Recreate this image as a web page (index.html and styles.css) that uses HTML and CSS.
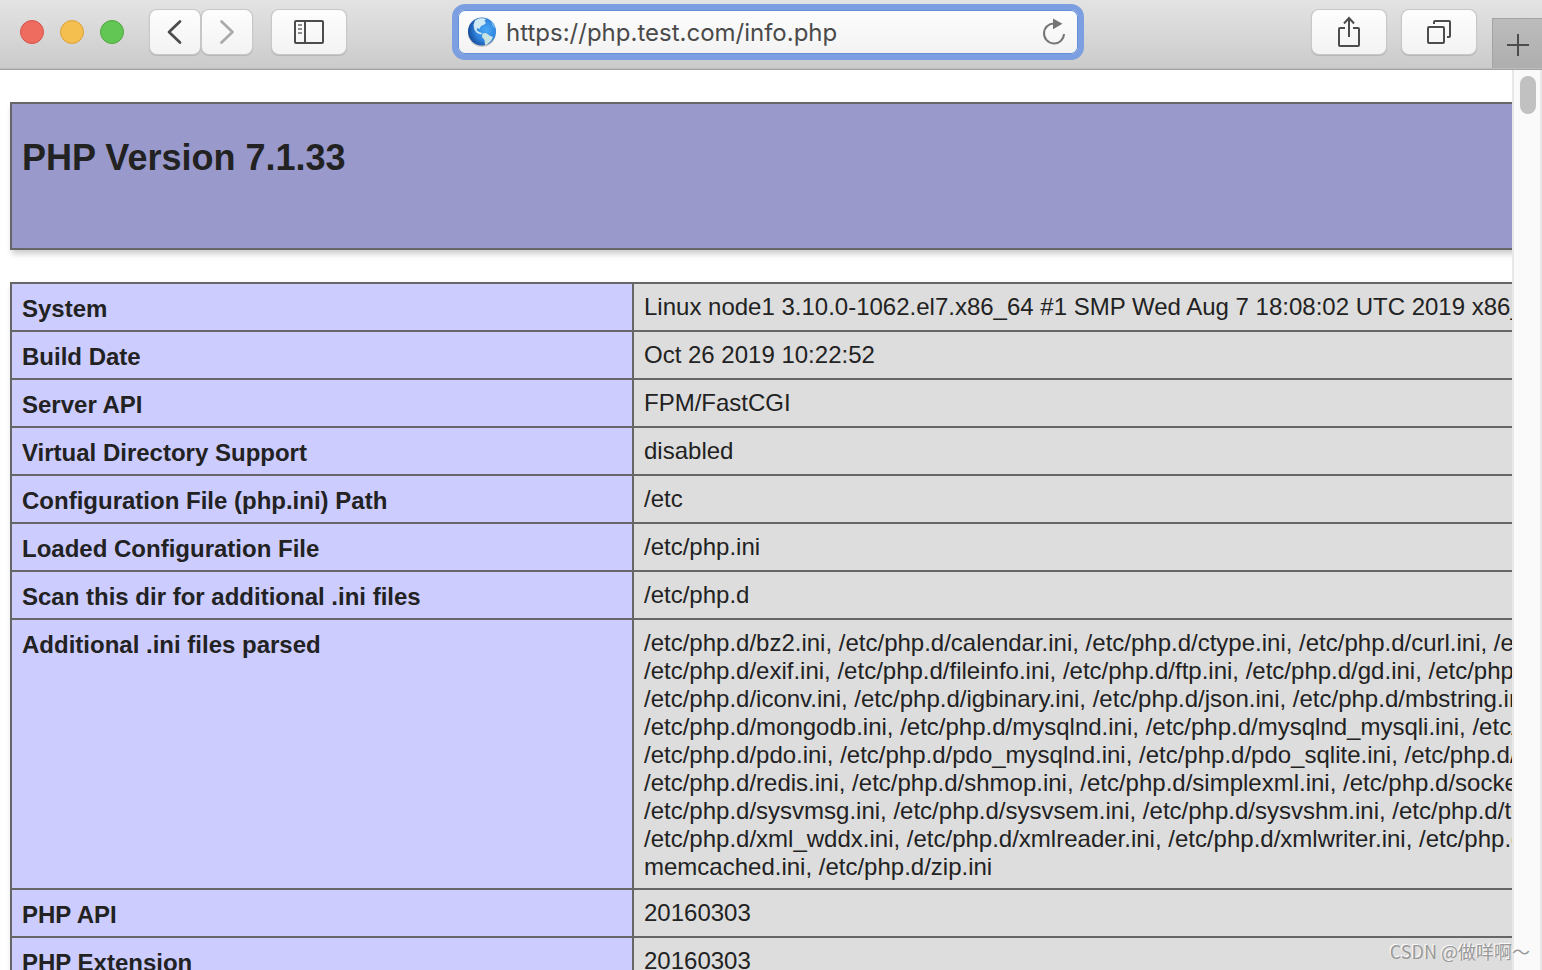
FILE: index.html
```html
<!DOCTYPE html>
<html lang="en">
<head>
<meta charset="utf-8">
<title>phpinfo()</title>
<link rel="stylesheet" href="styles.css">
</head>
<body>
<header class="toolbar">
  <div class="side side-left">
    <div class="lights">
      <button class="light light-close" aria-label="Close"></button>
      <button class="light light-min" aria-label="Minimize"></button>
      <button class="light light-max" aria-label="Zoom"></button>
    </div>
    <div class="nav">
      <button class="btn btn-nav" aria-label="Back"><svg width="50" height="44" viewBox="0 0 50 44"><path d="M30 11.500L19 22L30 32.500" fill="none" stroke="#4c4c4c" stroke-width="2.700" stroke-linecap="round" stroke-linejoin="round"/></svg></button>
      <button class="btn btn-nav" aria-label="Forward"><svg width="50" height="44" viewBox="0 0 50 44"><path d="M19.500 11.500L30.500 22L19.500 32.500" fill="none" stroke="#aaa" stroke-width="2.700" stroke-linecap="round" stroke-linejoin="round"/></svg></button>
    </div>
    <button class="btn btn-wide" aria-label="Show sidebar"><svg width="32" height="26" viewBox="0 0 32 26"><rect x="2" y="2" width="28" height="22" rx="1" fill="none" stroke="#4c4c4c" stroke-width="2"/><path d="M12 2V24" stroke="#4c4c4c" stroke-width="2"/><path d="M5 6H9M5 10H9M5 14H9" stroke="#8c8c8c" stroke-width="2"/></svg></button>
  </div>
  <form class="address">
    <svg class="globe" width="30" height="32" viewBox="0 0 30 32">
      <defs><radialGradient id="sea" cx=".65" cy=".45" r=".65"><stop offset="0" stop-color="#49a9f7"/><stop offset=".6" stop-color="#2f83dc"/><stop offset="1" stop-color="#164c9b"/></radialGradient></defs>
      <ellipse cx="15" cy="17" rx="14" ry="14" fill="#000" opacity=".18"/>
      <circle cx="15" cy="15.500" r="14" fill="url(#sea)"/>
      <path d="M8 4.500C10 2.500 13 2 16 2.200L19 3L17.500 5L19 7L16.500 9L14 10L12.500 13L10.500 12L9.500 14L12 16L15 17L14 18.500L10 17L7.500 14L6.500 9Z" fill="#cfe9f5"/>
      <path d="M15.500 17.500L19 17L22.500 19.500L26 21L24 25L20 28.500L18 29L17.500 24L15 21Z" fill="#c7e3e2"/>
      <path d="M24 5.500L26 7.500L28 11L27.500 12L25.500 9.500Z" fill="#7fc0f3"/>
    </svg>
    <input class="url" type="text" aria-label="Address" value="https://php.test.com/info.php" spellcheck="false">
    <button class="reload" type="button" aria-label="Reload"><svg width="28" height="30" viewBox="0 0 28 30"><path d="M14.500 6.500A10 10 0 1 0 24 17" fill="none" stroke="#757575" stroke-width="2"/><path d="M13 1.500L22.500 6.800L13 12.300Z" fill="#757575"/></svg></button>
  </form>
  <div class="side side-right">
    <button class="btn btn-wide" aria-label="Share"><svg width="28" height="34" viewBox="0 0 28 34"><path d="M10 13H5Q4 13 4 14V30Q4 31 5 31H23Q24 31 24 30V14Q24 13 23 13H18" fill="none" stroke="#4c4c4c" stroke-width="2"/><path d="M14 22V3M9 8.500L14 3L19 8.500" fill="none" stroke="#4c4c4c" stroke-width="2"/></svg></button>
    <button class="btn btn-wide" aria-label="Show all tabs"><svg width="28" height="28" viewBox="0 0 28 28"><rect x="3" y="9" width="16" height="16" rx="1" fill="none" stroke="#4c4c4c" stroke-width="2"/><path d="M9 6V4Q9 3 10 3H24Q25 3 25 4V18Q25 19 24 19H22" fill="none" stroke="#4c4c4c" stroke-width="2"/></svg></button>
    <button class="new-tab" aria-label="New tab"><svg width="24" height="24" viewBox="0 0 24 24"><path d="M12 1V23M1 12H23" stroke="#4c4c4c" stroke-width="2"/></svg></button>
  </div>
</header>
<div class="window">
  <main class="page">
    <section class="banner"><h1>PHP Version 7.1.33</h1></section>
    <table class="info">
      <tbody>
        <tr><th scope="row">System</th><td>Linux node1 3.10.0-1062.el7.x86_64 #1 SMP Wed Aug 7 18:08:02 UTC 2019 x86_64</td></tr>
        <tr><th scope="row">Build Date</th><td>Oct 26 2019 10:22:52</td></tr>
        <tr><th scope="row">Server API</th><td>FPM/FastCGI</td></tr>
        <tr><th scope="row">Virtual Directory Support</th><td>disabled</td></tr>
        <tr><th scope="row">Configuration File (php.ini) Path</th><td>/etc</td></tr>
        <tr><th scope="row">Loaded Configuration File</th><td>/etc/php.ini</td></tr>
        <tr><th scope="row">Scan this dir for additional .ini files</th><td>/etc/php.d</td></tr>
        <tr><th scope="row">Additional .ini files parsed</th><td>/etc/php.d/bz2.ini, /etc/php.d/calendar.ini, /etc/php.d/ctype.ini, /etc/php.d/curl.ini, /etc<br>/etc/php.d/exif.ini, /etc/php.d/fileinfo.ini, /etc/php.d/ftp.ini, /etc/php.d/gd.ini, /etc/php.d<br>/etc/php.d/iconv.ini, /etc/php.d/igbinary.ini, /etc/php.d/json.ini, /etc/php.d/mbstring.ini,<br>/etc/php.d/mongodb.ini, /etc/php.d/mysqlnd.ini, /etc/php.d/mysqlnd_mysqli.ini, /etc/php.d<br>/etc/php.d/pdo.ini, /etc/php.d/pdo_mysqlnd.ini, /etc/php.d/pdo_sqlite.ini, /etc/php.d/phar.ini<br>/etc/php.d/redis.ini, /etc/php.d/shmop.ini, /etc/php.d/simplexml.ini, /etc/php.d/sockets.ini<br>/etc/php.d/sysvmsg.ini, /etc/php.d/sysvsem.ini, /etc/php.d/sysvshm.ini, /etc/php.d/tokenizer.ini<br>/etc/php.d/xml_wddx.ini, /etc/php.d/xmlreader.ini, /etc/php.d/xmlwriter.ini, /etc/php.d<br>memcached.ini, /etc/php.d/zip.ini</td></tr>
        <tr><th scope="row">PHP API</th><td>20160303</td></tr>
        <tr><th scope="row">PHP Extension</th><td>20160303</td></tr>
      </tbody>
    </table>
  </main>
  <div class="scrollbar"><div class="thumb"></div></div>
</div>
<div class="watermark">CSDN @做咩啊～</div>
</body>
</html>
```
FILE: styles.css
```css
* { box-sizing: border-box; }

body {
  margin: 0;
  height: 100vh;
  display: flex;
  flex-direction: column;
  overflow: hidden;
  background: #fff;
  color: #222;
  font-family: "Liberation Sans", Arial, sans-serif;
  font-size: 24px;
  line-height: 28px;
}

button { padding: 0; border: 0; }
svg { display: block; flex: none; }

.toolbar {
  flex: none;
  display: flex;
  align-items: flex-start;
  height: 70px;
  background: linear-gradient(#e3e3e3, #cbcbcb);
  border-bottom: 1px solid #a3a3a3;
  box-shadow: inset 0 -1px #bdbdbd;
}

.side { flex: 1; display: flex; align-items: flex-start; padding-top: 10px; }
.side-right { justify-content: flex-end; gap: 16px; }

.lights { display: flex; gap: 16px; margin: 10px 26px 0 20px; }
.light { width: 24px; height: 24px; border-radius: 50%; border: 1px solid; }
.light-close { background: #ed6b5f; border-color: #d55349; }
.light-min { background: #f5bf4f; border-color: #d9a13c; }
.light-max { background: #62c655; border-color: #4da73d; }

.nav { display: flex; gap: 2px; margin-right: 20px; }

.btn {
  display: flex;
  align-items: center;
  justify-content: center;
  height: 44px;
  border-radius: 7px;
  background: linear-gradient(#fdfdfd, #f3f3f3);
  box-shadow: 0 0 0 1px #c8c8c8, 0 1px 1px 1px #b4b4b4;
}
.btn-nav { width: 50px; }
.btn-wide { width: 74px; }

.address {
  flex: 0 1 632px;
  display: flex;
  align-items: center;
  height: 56px;
  margin: 4px 6px 0 0;
  padding: 0 10px 0 9px;
  border: 6px solid #7c9fe1;
  border-radius: 13px;
  background: linear-gradient(#fdfdfd, #f3f3f3);
  box-shadow: inset 0 0 0 1px #668fd4;
}
.url {
  flex: 1;
  min-width: 0;
  height: 32px;
  padding: 0 0 0 9px;
  border: 0;
  outline: 0;
  background: none;
  color: #4a4a4a;
  font-family: Inter, sans-serif;
  font-size: 24px;
}
.reload { background: none; }

.new-tab {
  display: flex;
  align-items: center;
  justify-content: center;
  width: 50px;
  height: 50px;
  margin-top: 8px;
  padding-top: 2px;
  background: linear-gradient(#bcbcbc, #aeaeae);
  border: solid #a3a3a3;
  border-width: 1px 0 0 1px;
}

.window { flex: 1; min-height: 0; display: flex; }
.page { flex: 1; min-width: 0; overflow: hidden; padding: 32px 0 0 10px; }

.banner, .info {
  width: 1868px;
  box-shadow: 2px 4px 6px #ccc;
}
.banner {
  height: 148px;
  margin-bottom: 32px;
  padding: 32px 10px;
  border: 2px solid #666;
  background: #99c;
}
h1 { margin: 0; font-size: 36px; line-height: 44px; }

.info { border-collapse: collapse; table-layout: fixed; }
.info th, .info td {
  border: 2px solid #666;
  text-align: left;
  vertical-align: top;
  white-space: nowrap;
}
.info th { width: 622px; padding: 11px 10px 7px; background: #ccf; }
.info td { padding: 9px 10px 7px; background: #ddd; }

.scrollbar {
  flex: none;
  width: 30px;
  padding: 6px 4px 0 6px;
  background: #fafafa;
  border: solid #e8e8e8;
  border-width: 0 2px;
}
.thumb { width: 16px; height: 38px; border-radius: 8px; background: #c1c1c1; }

.watermark {
  position: absolute;
  right: 12px;
  bottom: 5px;
  color: #999;
  font-family: "Noto Sans CJK SC", sans-serif;
  font-size: 18px;
  text-shadow: -1px -1px 1px #fff;
}
```
